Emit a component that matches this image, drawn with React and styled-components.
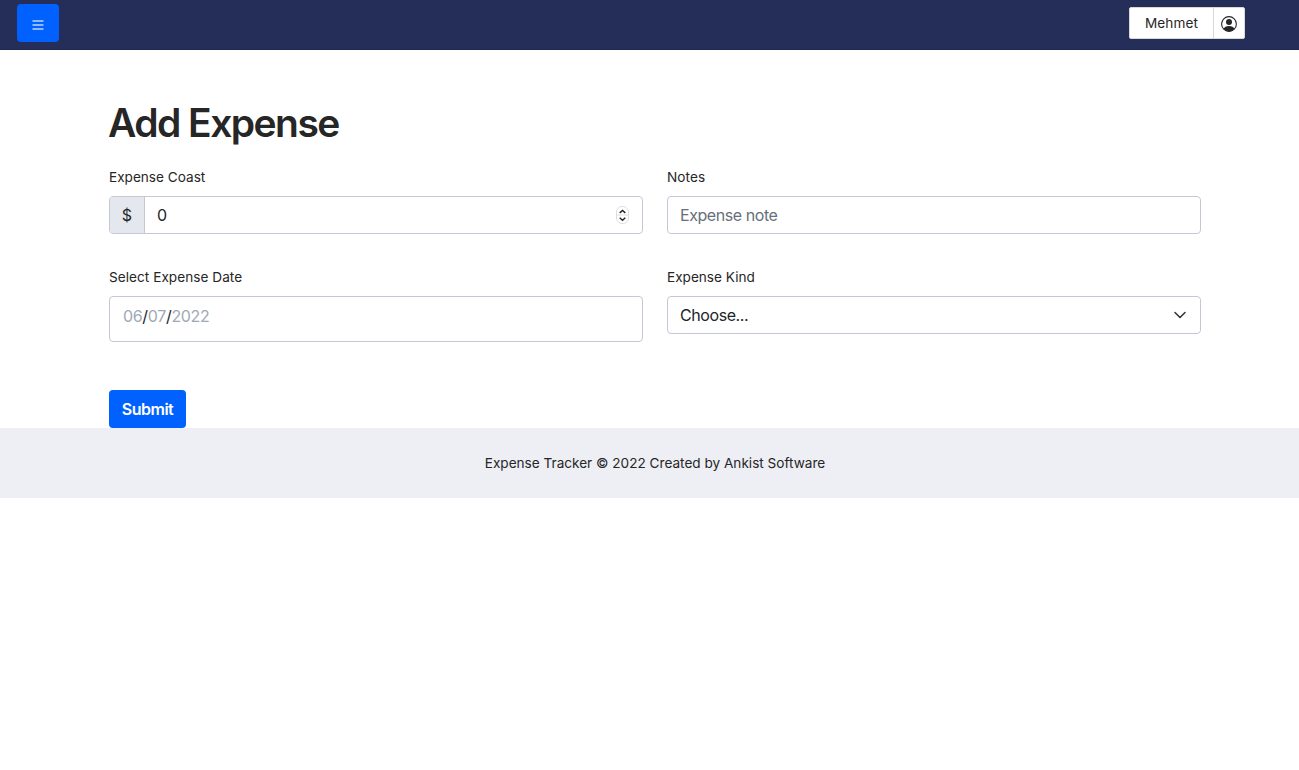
import React from "react";
import styled, { createGlobalStyle } from "styled-components";

const GlobalStyle = createGlobalStyle`
  *, *::before, *::after { box-sizing: border-box; }
  body {
    margin: 0;
    background: #fff;
    color: #262626;
    font-family: Inter, "Liberation Sans", sans-serif;
    font-size: 13.6px;
    line-height: 20px;
  }
  button, input { font-family: inherit; margin: 0; }
`;

const Header = styled.header`
  display: flex;
  justify-content: space-between;
  align-items: flex-start;
  height: 50px;
  padding: 4px 54px 0 17px;
  background: #252e58;
  border-bottom: 1px solid #20284f;
`;

const MenuButton = styled.button`
  display: flex;
  align-items: center;
  justify-content: center;
  width: 42px;
  height: 38px;
  padding: 4px 0 0;
  border: 0;
  border-radius: 4px;
  background: #0061ff;
`;

const UserGroup = styled.div`
  display: flex;
  height: 32px;
  margin-top: 3px;
  border: 1px solid #d9d9d9;
  border-radius: 2px;
  background: #fff;
`;

const UserName = styled.button`
  width: 84px;
  padding: 0 0 1px;
  border: 0;
  border-right: 1px solid #d9d9d9;
  background: none;
  color: #262626;
  font-size: 13.6px;
  letter-spacing: 0.1px;
`;

const UserIcon = styled.button`
  display: flex;
  align-items: center;
  justify-content: center;
  width: 30px;
  padding: 2px 0 0;
  border: 0;
  background: none;
`;

const Main = styled.main`
  padding: 49px 98px 0 109px;
`;

const Title = styled.h1`
  margin: 0 0 20px -1px;
  font-size: 39px;
  font-weight: 600;
  line-height: 48px;
  letter-spacing: -1.55px;
`;

const Form = styled.form`
  display: grid;
  grid-template-columns: 1fr 1fr;
  column-gap: 24px;
`;

const Field = styled.div`
  height: ${(p) => p.$height || 100}px;
`;

const Label = styled.label`
  display: block;
  margin-bottom: 9px;
  letter-spacing: ${(p) => p.$spacing || "0"};
`;

const Control = styled.div`
  display: flex;
  align-items: ${(p) => (p.$tall ? "flex-start" : "center")};
  height: ${(p) => (p.$tall ? 46 : 38)}px;
  padding: ${(p) => (p.$tall ? "7px 12px" : "0 12px")};
  border: 1px solid #c4c9d5;
  border-radius: 4px;
  color: #212529;
  font-size: 16px;
  font-weight: 430;
  line-height: 24px;
`;

const AmountControl = styled(Control)`
  padding: 0 13px 0 0;
`;

const Prefix = styled.span`
  display: flex;
  align-items: center;
  justify-content: center;
  width: 35px;
  height: 36px;
  border-right: 1px solid #c4c9d5;
  border-radius: 3px 0 0 3px;
  background: #e4e7ed;
`;

const TextInput = styled.input`
  flex: 1;
  min-width: 0;
  height: 36px;
  padding: ${(p) => p.$pad || "0"};
  border: 0;
  outline: 0;
  background: none;
  color: #212529;
  font-size: 16px;
  font-weight: inherit;
  letter-spacing: ${(p) => p.$spacing || "0"};
  &::placeholder { color: #66707a; opacity: 1; }
`;

const DateText = styled.span`
  padding-left: 1px;
  letter-spacing: -0.34px;
`;

const DatePart = styled.span`
  color: #a0a9b4;
`;

const SelectText = styled.span`
  flex: 1;
  letter-spacing: -0.42px;
`;

const Submit = styled.button`
  justify-self: start;
  width: 77px;
  height: 38px;
  padding: 0;
  border: 0;
  border-radius: 4px;
  background: #0061ff;
  color: #fff;
  font-size: 16px;
  font-weight: 580;
  letter-spacing: -0.5px;
`;

const Footer = styled.footer`
  height: 70px;
  padding: 25px 0 0 11px;
  background: #edeff4;
  text-align: center;
`;

export default function App() {
  return (
    <>
      <GlobalStyle />
      <Header>
        <MenuButton type="button" aria-label="Menu">
          <svg width="12" height="10" viewBox="0 0 12 10">
            <path d="M.5 1h11M.5 5h11M.5 9h11" stroke="#8dbaff" strokeWidth="1.8" />
          </svg>
        </MenuButton>
        <UserGroup>
          <UserName type="button">Mehmet</UserName>
          <UserIcon type="button" aria-label="Account">
            <svg width="16" height="16" viewBox="0 0 16 16" fill="#262626">
              <circle cx="8" cy="8" r="7.4" fill="none" stroke="#262626" strokeWidth="1.1" />
              <circle cx="8" cy="6" r="3" />
              <path d="M2.500 13.100C3.300 11.400 5.200 10.100 8 10.100s4.700 1.300 5.500 3C12.200 14.700 10.200 15.500 8 15.500s-4.200-.8-5.500-2.400Z" />
            </svg>
          </UserIcon>
        </UserGroup>
      </Header>
      <Main>
        <Title>Add Expense</Title>
        <Form onSubmit={(e) => e.preventDefault()}>
          <Field>
            <Label>Expense Coast</Label>
            <AmountControl>
              <Prefix>$</Prefix>
              <TextInput defaultValue="0" $pad="0 12px" aria-label="Expense Coast" />
              <svg width="13" height="18" viewBox="0 0 13 18" fill="none">
                <rect x=".5" y=".5" width="12" height="17" rx="5.500" stroke="#dedede" />
                <path d="M1 9h11" stroke="#dedede" />
                <path d="m3.700 6.900 2.800-2.500 2.800 2.500M3.700 11.700l2.800 2.500 2.800-2.500" stroke="#262626" strokeWidth="1.500" />
              </svg>
            </AmountControl>
          </Field>
          <Field>
            <Label $spacing="0.1px">Notes</Label>
            <Control>
              <TextInput placeholder="Expense note" aria-label="Notes" $spacing="-0.43px" />
            </Control>
          </Field>
          <Field $height={123}>
            <Label $spacing="0.04px">Select Expense Date</Label>
            <Control $tall>
              <DateText>
                <DatePart>06</DatePart>/<DatePart>07</DatePart>/<DatePart>2022</DatePart>
              </DateText>
            </Control>
          </Field>
          <Field $height={123}>
            <Label>Expense Kind</Label>
            <Control>
              <SelectText>Choose...</SelectText>
              <svg width="16" height="12" viewBox="0 0 16 12" fill="none">
                <path d="m3 3.500 5 5 5-5" stroke="#343a40" strokeWidth="1.600" strokeLinecap="round" strokeLinejoin="round" />
              </svg>
            </Control>
          </Field>
          <Submit type="submit">Submit</Submit>
        </Form>
      </Main>
      <Footer>Expense Tracker © 2022 Created by Ankist Software</Footer>
    </>
  );
}
